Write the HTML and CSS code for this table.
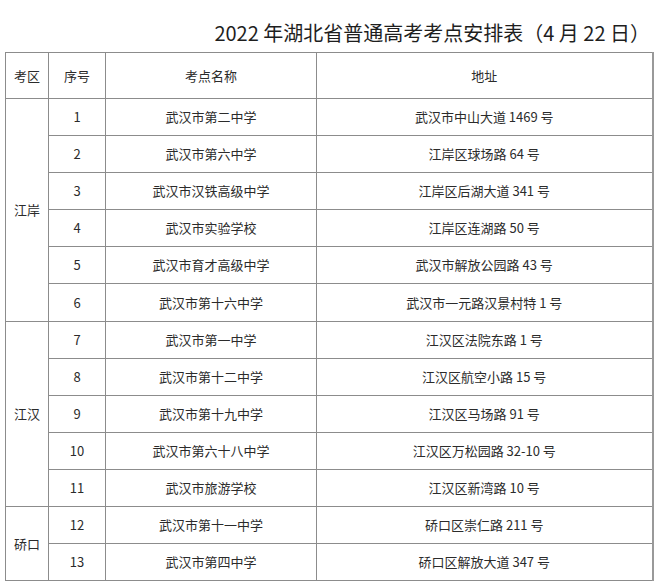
FILE: index.html
```html
<!DOCTYPE html>
<html lang="zh-CN">
<head>
<meta charset="utf-8">
<title>2022年湖北省普通高考考点安排表</title>
<link rel="stylesheet" href="styles.css">
</head>
<body>
<div class="page">
  <h1 class="title">2022 年湖北省普通高考考点安排表（4 月 22 日）</h1>
  <table class="sched">
    <colgroup>
      <col class="c-area"><col class="c-no"><col class="c-name"><col class="c-addr">
    </colgroup>
    <thead>
      <tr class="head"><th>考区</th><th>序号</th><th>考点名称</th><th>地址</th></tr>
    </thead>
    <tbody>
      <tr><td rowspan="6">江岸</td><td>1</td><td>武汉市第二中学</td><td>武汉市中山大道 1469 号</td></tr>
      <tr><td>2</td><td>武汉市第六中学</td><td>江岸区球场路 64 号</td></tr>
      <tr><td>3</td><td>武汉市汉铁高级中学</td><td>江岸区后湖大道 341 号</td></tr>
      <tr><td>4</td><td>武汉市实验学校</td><td>江岸区连湖路 50 号</td></tr>
      <tr><td>5</td><td>武汉市育才高级中学</td><td>武汉市解放公园路 43 号</td></tr>
      <tr><td>6</td><td>武汉市第十六中学</td><td>武汉市一元路汉景村特 1 号</td></tr>
      <tr><td rowspan="5">江汉</td><td>7</td><td>武汉市第一中学</td><td>江汉区法院东路 1 号</td></tr>
      <tr><td>8</td><td>武汉市第十二中学</td><td>江汉区航空小路 15 号</td></tr>
      <tr><td>9</td><td>武汉市第十九中学</td><td>江汉区马场路 91 号</td></tr>
      <tr><td>10</td><td>武汉市第六十八中学</td><td>江汉区万松园路 32-10 号</td></tr>
      <tr><td>11</td><td>武汉市旅游学校</td><td>江汉区新湾路 10 号</td></tr>
      <tr><td rowspan="2">硚口</td><td>12</td><td>武汉市第十一中学</td><td>硚口区崇仁路 211 号</td></tr>
      <tr><td>13</td><td>武汉市第四中学</td><td>硚口区解放大道 347 号</td></tr>
    </tbody>
  </table>
</div>
</body>
</html>
```

FILE: styles.css
```css
html, body {
  margin: 0;
  padding: 0;
  background: #fff;
}
.page {
  width: 660px;
  font-family: "Noto Sans CJK SC", "Noto Sans", sans-serif;
  color: #333;
}
.title {
  margin: 0;
  height: 52px;
  box-sizing: border-box;
  padding: 20px 10px 0 0;
  text-align: right;
  font-size: 20px;
  line-height: 26px;
  font-weight: 400;
  color: #1e1e1e;
  white-space: nowrap;
}
.sched {
  margin-left: 5px;
  border-collapse: collapse;
  table-layout: fixed;
  width: 647px;
  font-size: 13px;
  border-right: 2px solid #999;
}
.c-area { width: 43px; }
.c-no { width: 57px; }
.c-name { width: 211px; }
.c-addr { width: 336px; }
.sched th, .sched td {
  border: 1px solid #8c8c8c;
  text-align: center;
  vertical-align: middle;
  padding: 0;
  font-weight: 400;
  line-height: 18px;
  color: #2b2b2b;
}
.sched tr.head { height: 46px; }
.sched tbody tr { height: 37.1px; }
```
